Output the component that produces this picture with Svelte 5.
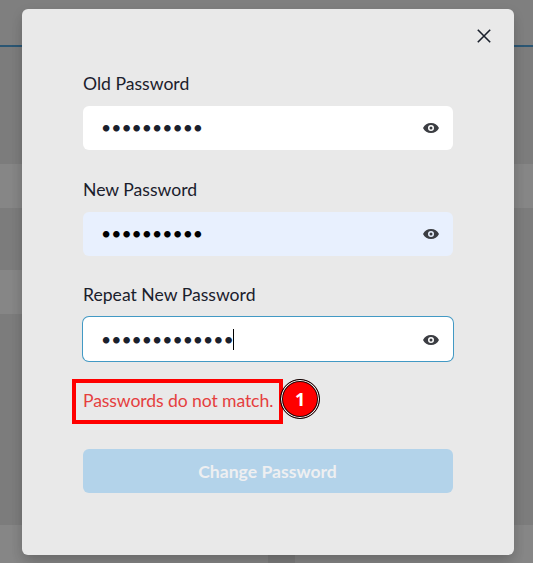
<script>
  const fields = [
    { label: 'Old Password', length: 10, kind: 'plain' },
    { label: 'New Password', length: 10, kind: 'autofill' },
    { label: 'Repeat New Password', length: 13, kind: 'focused' }
  ];
</script>

<div class="page">
  <div class="backdrop">
    <div class="header"></div>
    <div class="band first"></div>
    <div class="band second"></div>
    <div class="footer"><i></i><i></i></div>
  </div>

  <div class="modal" role="dialog">
    <button class="close" aria-label="Close">
      <svg width="14" height="14" viewBox="0 0 14 14"><path d="M.8.8 13.2 13.2M13.2.8.8 13.2" /></svg>
    </button>
    <form>
      {#each fields as field}
        <div class="field">
          <span class="label">{field.label}</span>
          <div class="input {field.kind}">
            <span class="dots">{'•'.repeat(field.length)}</span>
            {#if field.kind === 'focused'}<span class="caret"></span>{/if}
            <svg class="eye" width="16" height="10" viewBox="0 0 16 10">
              <path fill-rule="evenodd" d="M0 5C1.7 1.8 4.4 0 8 0s6.300 1.800 8 5c-1.700 3.200-4.400 5-8 5S1.700 8.200 0 5ZM8 2a3 3 0 1 0 0 6 3 3 0 0 0 0-6Z" />
              <circle cx="8" cy="5" r="1.500" />
            </svg>
          </div>
        </div>
      {/each}
      <div class="error">
        <span>Passwords do not match.</span>
        <div class="outline"></div>
        <div class="marker">1</div>
      </div>
      <button class="submit" type="button" disabled>Change Password</button>
    </form>
  </div>
</div>

<style>
  .page {
    position: relative;
    width: 533px;
    height: 563px;
    overflow: hidden;
    box-sizing: border-box;
    padding: 9px 19px 8px 22px;
    background: #7c7c7c;
    font-family: Lato, sans-serif;
    font-size: 17.6px;
    color: #1a202c;
  }
  .backdrop {
    position: absolute;
    inset: 0;
    display: flex;
    flex-direction: column;
  }
  .header {
    height: 45px;
    border-bottom: 2px solid #2b5673;
    background: #7f7f7f;
  }
  .band {
    height: 44px;
    background: #868686;
  }
  .first { margin-top: 117px; }
  .second { margin-top: 62px; width: 260px; }
  .footer {
    margin-top: 211px;
    flex: 1;
    display: flex;
    gap: 27px;
  }
  .footer i { background: #868686; width: 268px; flex: none; }
  .modal {
    position: relative;
    box-sizing: border-box;
    width: 492px;
    height: 546px;
    padding: 62px 61px;
    border-radius: 6px;
    background: #e9e9e9;
    box-shadow: 0 10px 15px -3px rgba(0, 0, 0, 0.12), 0 4px 12px rgba(0, 0, 0, 0.12);
  }
  button { border: 0; font: inherit; padding: 0; }
  .close {
    position: absolute;
    top: 19.5px;
    right: 22.5px;
    width: 15px;
    height: 15px;
    display: flex;
    background: none;
  }
  .close path { stroke: #1a202c; stroke-width: 1.6; fill: none; }
  .field { height: 105.6px; }
  .label {
    display: block;
    height: 26px;
    line-height: 25px;
    margin-bottom: 9px;
  }
  .input {
    box-sizing: border-box;
    height: 44px;
    padding: 0 14.5px 0 18px;
    display: flex;
    align-items: center;
    border-radius: 6px;
    background: #fff;
  }
  .autofill { background: #e8f0fe; color: #000; }
  .focused { padding-top: 1px; box-shadow: 0 0 0 1px #4299c4; }
  .dots { line-height: 44px; }
  .caret { width: 1px; height: 21px; margin-left: -1px; background: #000; }
  .eye { margin-left: auto; fill: #3b3d42; }
  .error {
    position: relative;
    height: 26px;
    line-height: 25px;
    color: #e53e3e;
    letter-spacing: -0.1px;
  }
  .outline {
    position: absolute;
    left: -11px;
    top: -9px;
    box-sizing: border-box;
    width: 211px;
    height: 45px;
    border: 4px solid #f00;
  }
  .marker {
    position: absolute;
    left: 197px;
    top: -9px;
    box-sizing: border-box;
    width: 40px;
    height: 40px;
    border: 1px solid #000;
    border-radius: 50%;
    background: #f00;
    box-shadow: inset 0 0 0 1px #fff, inset 0 0 0 2px #200;
    color: #fff;
    font: bold 18px/38px "Open Sans", sans-serif;
    text-align: center;
  }
  .submit {
    display: block;
    width: 370px;
    height: 44px;
    padding: 1px 1px 0 0;
    margin-top: 35px;
    border-radius: 6px;
    background: #b3d3ea;
    color: #eeeff1;
    font-weight: 700;
  }
</style>
